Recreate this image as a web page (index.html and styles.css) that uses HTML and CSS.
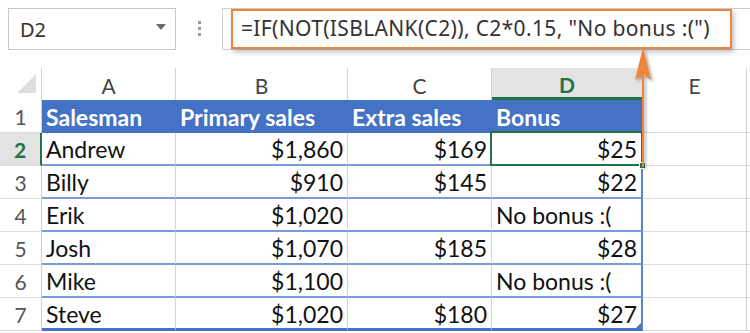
FILE: index.html
```html
<!DOCTYPE html>
<html>
<head>
<meta charset="utf-8">
<link rel="stylesheet" href="styles.css">
</head>
<body>
<div class="app">
  <div class="toolbar">
    <div class="namebox">
      <span class="nb-text">D2</span>
      <svg class="nb-caret" width="10" height="6" viewBox="0 0 10 6"><path d="M0 0H10L5 6Z" fill="#6b6b6b"/></svg>
    </div>
    <div class="dots"><i></i><i></i><i></i></div>
    <div class="fbar">
      <div class="formula">=IF(NOT(ISBLANK(C2)), C2*0.15, "No bonus :(")</div>
    </div>
  </div>

  <div class="sheet">
    <div class="ch corner"><span class="tri"></span></div>
    <div class="ch">A</div>
    <div class="ch">B</div>
    <div class="ch">C</div>
    <div class="ch ch-sel">D</div>
    <div class="ch">E</div>
    <div class="ch ch-last"></div>

    <div class="rh">1</div>
    <div class="c hd">Salesman</div>
    <div class="c hd">Primary sales</div>
    <div class="c hd">Extra sales</div>
    <div class="c hd hd-d">Bonus</div>
    <div class="c e"></div>
    <div class="c e2"></div>

    <div class="rh rh-sel">2</div>
    <div class="c t">Andrew</div>
    <div class="c t n">$1,860</div>
    <div class="c t n">$169</div>
    <div class="c t n d active">$25<span class="sel"><span class="handle"></span></span></div>
    <div class="c e"></div>
    <div class="c e2"></div>

    <div class="rh">3</div>
    <div class="c t">Billy</div>
    <div class="c t n">$910</div>
    <div class="c t n">$145</div>
    <div class="c t n d">$22</div>
    <div class="c e"></div>
    <div class="c e2"></div>

    <div class="rh">4</div>
    <div class="c t">Erik</div>
    <div class="c t n">$1,020</div>
    <div class="c t n"></div>
    <div class="c t d">No bonus :(</div>
    <div class="c e"></div>
    <div class="c e2"></div>

    <div class="rh">5</div>
    <div class="c t">Josh</div>
    <div class="c t n">$1,070</div>
    <div class="c t n">$185</div>
    <div class="c t n d">$28</div>
    <div class="c e"></div>
    <div class="c e2"></div>

    <div class="rh">6</div>
    <div class="c t">Mike</div>
    <div class="c t n">$1,100</div>
    <div class="c t n"></div>
    <div class="c t d">No bonus :(</div>
    <div class="c e"></div>
    <div class="c e2"></div>

    <div class="rh">7</div>
    <div class="c t last">Steve</div>
    <div class="c t n last">$1,020</div>
    <div class="c t n last">$180</div>
    <div class="c t n d last">$27<span class="resize"></span></div>
    <div class="c e"></div>
    <div class="c e2"></div>
  </div>

  <svg class="arrow" width="24" height="124" viewBox="0 0 24 124">
    <defs>
      <filter id="sh" x="-50%" y="-20%" width="200%" height="140%">
        <feDropShadow dx="2" dy="2" stdDeviation="1.5" flood-color="#000" flood-opacity="0.35"/>
      </filter>
    </defs>
    <g filter="url(#sh)">
      <rect x="10" y="20" width="2" height="100" fill="#f0843e"/>
      <path d="M11 0 L19 33 L11 27 L3 33 Z" fill="#f0843e"/>
    </g>
  </svg>
</div>
</body>
</html>
```

FILE: styles.css
```css
* { box-sizing: border-box; }
html, body { margin: 0; padding: 0; background: #fff; }
.app {
  position: relative;
  width: 750px;
  height: 333px;
  overflow: hidden;
  font-family: "Lato", "Liberation Sans", sans-serif;
}
.toolbar {
  display: flex;
  align-items: center;
  height: 68px;
  padding: 8px 0 18px 8px;
}
.namebox {
  width: 168px;
  height: 42px;
  border: 1px solid #c8c8c8;
  display: flex;
  align-items: center;
  justify-content: space-between;
  padding: 0 9px 0 11px;
}
.nb-text {
  font-family: "Noto Sans", "Open Sans", sans-serif;
  font-size: 20px;
  color: #333;
}
.nb-caret { margin-top: -4px; }
.dots {
  width: 46px;
  display: flex;
  flex-direction: column;
  align-items: center;
  gap: 3px;
  margin-top: -2px;
}
.dots i {
  display: block;
  width: 3px;
  height: 3px;
  background: #9a9a9a;
}
.fbar {
  flex: 1;
  height: 42px;
  border: 1px solid #cfcfcf;
  border-right: none;
  margin-right: -20px;
  padding: 0 38px 1px 8px;
  display: flex;
  align-items: flex-start;
}
.formula {
  width: 501px;
  height: 40px;
  border: 2px solid #f0843e;
  box-shadow: 2px 3px 5px rgba(0,0,0,0.25);
  font-family: "Noto Sans", "Open Sans", sans-serif;
  font-size: 21px;
  line-height: 28px;
  color: #333;
  padding: 3px 0 0 8px;
  white-space: nowrap;
  letter-spacing: 0.35px;
}

.sheet {
  display: grid;
  grid-template-columns: 42px 134px 172px 144px 151px 104px 20px;
  grid-template-rows: 32px repeat(7, 33px);
}
.ch {
  border-right: 1px solid #d4d4d4;
  display: flex;
  align-items: center;
  justify-content: center;
  font-size: 21px;
  color: #444;
  padding-top: 2px;
}
.ch-last { border-right: none; }
.corner { position: relative; }
.tri {
  position: absolute;
  right: 5px;
  bottom: 7px;
  width: 0;
  height: 0;
  border-left: 19px solid transparent;
  border-bottom: 19px solid #dedede;
}
.ch-sel {
  background: #e3e3e3;
  border-bottom: 3px solid #217346;
  color: #217346;
  font-weight: 700;
  padding-top: 4px;
}
.rh {
  border-right: 1px solid #cfcfcf;
  border-bottom: 1px solid #dcdcdc;
  display: flex;
  align-items: center;
  justify-content: center;
  font-size: 21px;
  color: #555;
}
.rh-sel {
  background: #e3e3e3;
  color: #217346;
  font-weight: 700;
  border-right: 2px solid #217346;
}
.c {
  display: flex;
  align-items: center;
  padding: 0 4px 0 4px;
  font-size: 23px;
  color: #111;
  white-space: nowrap;
}
.hd {
  background: #4472c4;
  color: #fff;
  font-weight: 700;
  padding-left: 4px;
}
.t {
  border-right: 1px solid #d4d4d4;
  border-bottom: 2px solid #7b9bd6;
  padding-top: 1px;
}
.n { justify-content: flex-end; }
.d { border-right: 2px solid #5b84cf; }
.last { border-bottom: 3px solid #4472c4; }
.e {
  border-right: 1px solid #d4d4d4;
  border-bottom: 1px solid #dcdcdc;
}
.e2 { border-bottom: 1px solid #dcdcdc; }
.active { position: relative; }
.sel {
  position: absolute;
  left: -2px;
  top: -2px;
  right: -2px;
  bottom: -2px;
  border: 2px solid #217346;
}
.handle {
  position: absolute;
  right: -5px;
  bottom: -5px;
  width: 7px;
  height: 7px;
  background: #217346;
  border: 1px solid #fff;
}
.d.last { position: relative; }
.resize {
  position: absolute;
  right: 0;
  bottom: 0;
  width: 0;
  height: 0;
  border-left: 5px solid transparent;
  border-bottom: 5px solid #4472c4;
}
.arrow {
  position: absolute;
  left: 632px;
  top: 47px;
}
```
